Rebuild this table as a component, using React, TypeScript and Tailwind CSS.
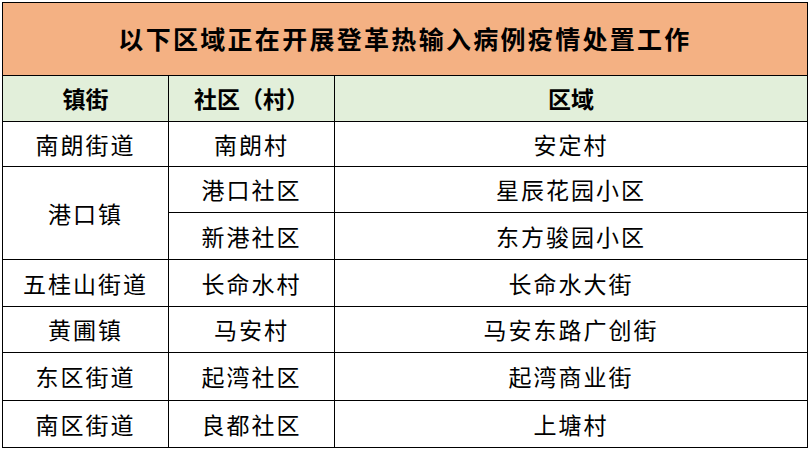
const rows: { town?: string; span?: number; community: string; area: string; h: string }[] = [
  { town: "南朗街道", community: "南朗村", area: "安定村", h: "h-[45px]" },
  { town: "港口镇", span: 2, community: "港口社区", area: "星辰花园小区", h: "h-[46px]" },
  { community: "新港社区", area: "东方骏园小区", h: "h-[47px]" },
  { town: "五桂山街道", community: "长命水村", area: "长命水大街", h: "h-[47px]" },
  { town: "黄圃镇", community: "马安村", area: "马安东路广创街", h: "h-[46px]" },
  { town: "东区街道", community: "起湾社区", area: "起湾商业街", h: "h-[48px]" },
  { town: "南区街道", community: "良都社区", area: "上塘村", h: "h-[47px]" },
];

export default function App() {
  return (
    <div
      className="w-[812px] h-[452px] bg-white p-[2px] text-black"
      style={{ fontFamily: '"Noto Sans CJK SC", "Noto Sans", sans-serif' }}
    >
      <table className="w-[806px] border-collapse table-fixed">
        <colgroup>
          <col className="w-[166px]" />
          <col className="w-[166px]" />
          <col />
        </colgroup>
        <tbody>
          <tr className="h-[73px]">
            <td
              colSpan={3}
              className="border border-black bg-[#f4b183] text-center text-[25px] font-bold tracking-[2.3px]"
            >
              以下区域正在开展登革热输入病例疫情处置工作
            </td>
          </tr>
          <tr className="h-[46px] bg-[#e2efda] text-[23px] font-bold">
            <td className="border border-black text-center">镇街</td>
            <td className="border border-black text-center">社区（村）</td>
            <td className="border border-black text-center">区域</td>
          </tr>
          {rows.map((r) => (
            <tr key={r.community} className={`${r.h} text-[23px] tracking-[2px]`}>
              {r.town && (
                <td rowSpan={r.span} className="border border-black text-center">
                  {r.town}
                </td>
              )}
              <td className="border border-black text-center">{r.community}</td>
              <td className="border border-black text-center">{r.area}</td>
            </tr>
          ))}
        </tbody>
      </table>
    </div>
  );
}
